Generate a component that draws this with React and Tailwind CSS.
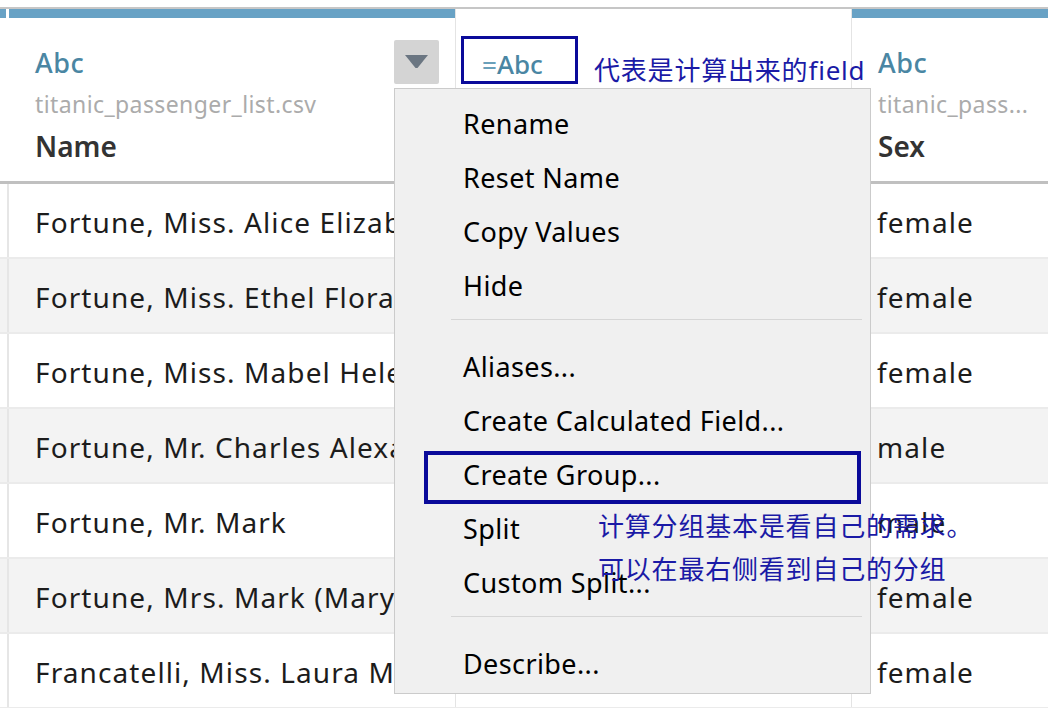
import React from 'react';

const rows = [
  { name: 'Fortune, Miss. Alice Elizabeth', sex: 'female' },
  { name: 'Fortune, Miss. Ethel Flora', sex: 'female' },
  { name: 'Fortune, Miss. Mabel Helen', sex: 'female' },
  { name: 'Fortune, Mr. Charles Alexander', sex: 'male' },
  { name: 'Fortune, Mr. Mark', sex: 'male' },
  { name: 'Fortune, Mrs. Mark (Mary McDougald)', sex: 'female' },
  { name: 'Francatelli, Miss. Laura Mabel', sex: 'female' },
];

const menuGroups = [
  ['Rename', 'Reset Name', 'Copy Values', 'Hide'],
  ['Aliases...', 'Create Calculated Field...', 'Create Group...', 'Split', 'Custom Split...'],
  ['Describe...'],
];

const sans = { fontFamily: '"Noto Sans", "Open Sans", sans-serif' };
const cjk = { fontFamily: '"Noto Sans", "Noto Sans CJK SC", sans-serif' };

const HeaderCell = ({ source, name }) => (
  <div className="pl-[26px] pt-[28px] whitespace-nowrap">
    <div className="text-[27px] leading-[34px] font-medium text-[#4a86a3] tracking-[0.5px]">Abc</div>
    <div className="text-[23px] leading-[48px] text-[#ababab] tracking-[0.4px]">{source}</div>
    <div className="text-[28px] leading-[36px] font-semibold text-[#333]">{name}</div>
  </div>
);

const App = () => {
  return (
    <div className="relative w-[1048px] h-[708px] overflow-hidden bg-white" style={sans}>
      {/* header */}
      <div className="h-[7px] bg-white" />
      <div className="h-[2px] bg-[#c6c6c6]" />
      <div className="flex h-[175px] border-b-[3px] border-[#c0c0c0]">
        <div className="w-[9px] flex">
          <div className="w-[6px] h-[9px] bg-[#68a2c5]" />
        </div>
        <div className="w-[447px] border-r border-[#e4e4e4] flex flex-col">
          <div className="h-[9px] bg-[#68a2c5]" />
          <div className="relative flex-1">
            <HeaderCell source="titanic_passenger_list.csv" name="Name" />
            <div className="absolute left-[385px] top-[22px] w-[45px] h-[44px] rounded-[2px] bg-[#d4d4d4] flex items-center justify-center">
              <svg width="23" height="14" viewBox="0 0 23 14">
                <path d="M0 0 H23 L12.5 13 H10.5 Z" fill="#6b7682" />
              </svg>
            </div>
          </div>
        </div>
        <div className="w-[396px] border-r border-[#e4e4e4] pt-[33px] pl-[26px]">
          <div className="text-[26px] leading-[44px] font-medium text-[#4a86a3]">
            <span className="text-[#6aa0ba]">=</span>Abc
          </div>
        </div>
        <div className="flex-1 flex flex-col">
          <div className="h-[9px] bg-[#68a2c5]" />
          <div className="flex-1">
            <HeaderCell source="titanic_pass..." name="Sex" />
          </div>
        </div>
      </div>

      {/* rows */}
      {rows.map((r, i) => (
        <div
          key={i}
          className={`flex h-[75px] border-b-2 border-[#ebebeb] ${i % 2 === 1 ? 'bg-[#f3f3f3]' : 'bg-white'}`}
        >
          <div className="w-[7px]" />
          <div className="w-[2px] bg-[#e6e6e6]" />
          <div className="w-[447px] border-r border-[#e4e4e4] pl-[26px] pt-[3px] flex items-center whitespace-nowrap overflow-hidden text-[28px] tracking-[1.1px] text-[#1c1c1c]">
            {r.name}
          </div>
          <div className="w-[396px] border-r border-[#e4e4e4]" />
          <div className="flex-1 pl-[25px] pt-[3px] flex items-center text-[28px] tracking-[1.1px] text-[#1c1c1c]">{r.sex}</div>
        </div>
      ))}

      {/* =Abc highlight */}
      <div className="absolute left-[461px] top-[36px] w-[117px] h-[48px] border-[3px] border-[#0a0a9a]" />
      <div className="absolute left-[594px] top-[52px] text-[26px] leading-[36px] tracking-[0.8px] text-[#1a1aa6] whitespace-nowrap" style={cjk}>
        代表是计算出来的field
      </div>

      {/* context menu */}
      <div className="absolute left-[394px] top-[88px] w-[477px] h-[606px] bg-[#f0f0f0] border border-[#cbcbcb] pt-[8px]">
        {menuGroups.map((g, gi) => (
          <div key={gi}>
            {gi > 0 && (
              <div className="pt-[6px] pb-[20px] pl-[56px] pr-[8px]">
                <div className="h-px bg-[#d6d6d6]" />
              </div>
            )}
            {g.map((item) => (
              <div key={item} className="h-[54px] pl-[68px] flex items-center text-[27px] tracking-[0.4px] text-black whitespace-nowrap">
                {item}
              </div>
            ))}
          </div>
        ))}
      </div>

      {/* Create Group highlight and notes */}
      <div className="absolute left-[424px] top-[451px] w-[437px] h-[53px] border-[4px] border-[#0a0a9a]" />
      <div className="absolute left-[598px] top-[508px] text-[26px] leading-[36px] tracking-[0.8px] text-[#1a1aa6] whitespace-nowrap" style={cjk}>
        计算分组基本是看自己的需求。
      </div>
      <div className="absolute left-[598px] top-[551px] text-[26px] leading-[36px] tracking-[0.8px] text-[#1a1aa6] whitespace-nowrap" style={cjk}>
        可以在最右侧看到自己的分组
      </div>
    </div>
  );
};

export default App;
